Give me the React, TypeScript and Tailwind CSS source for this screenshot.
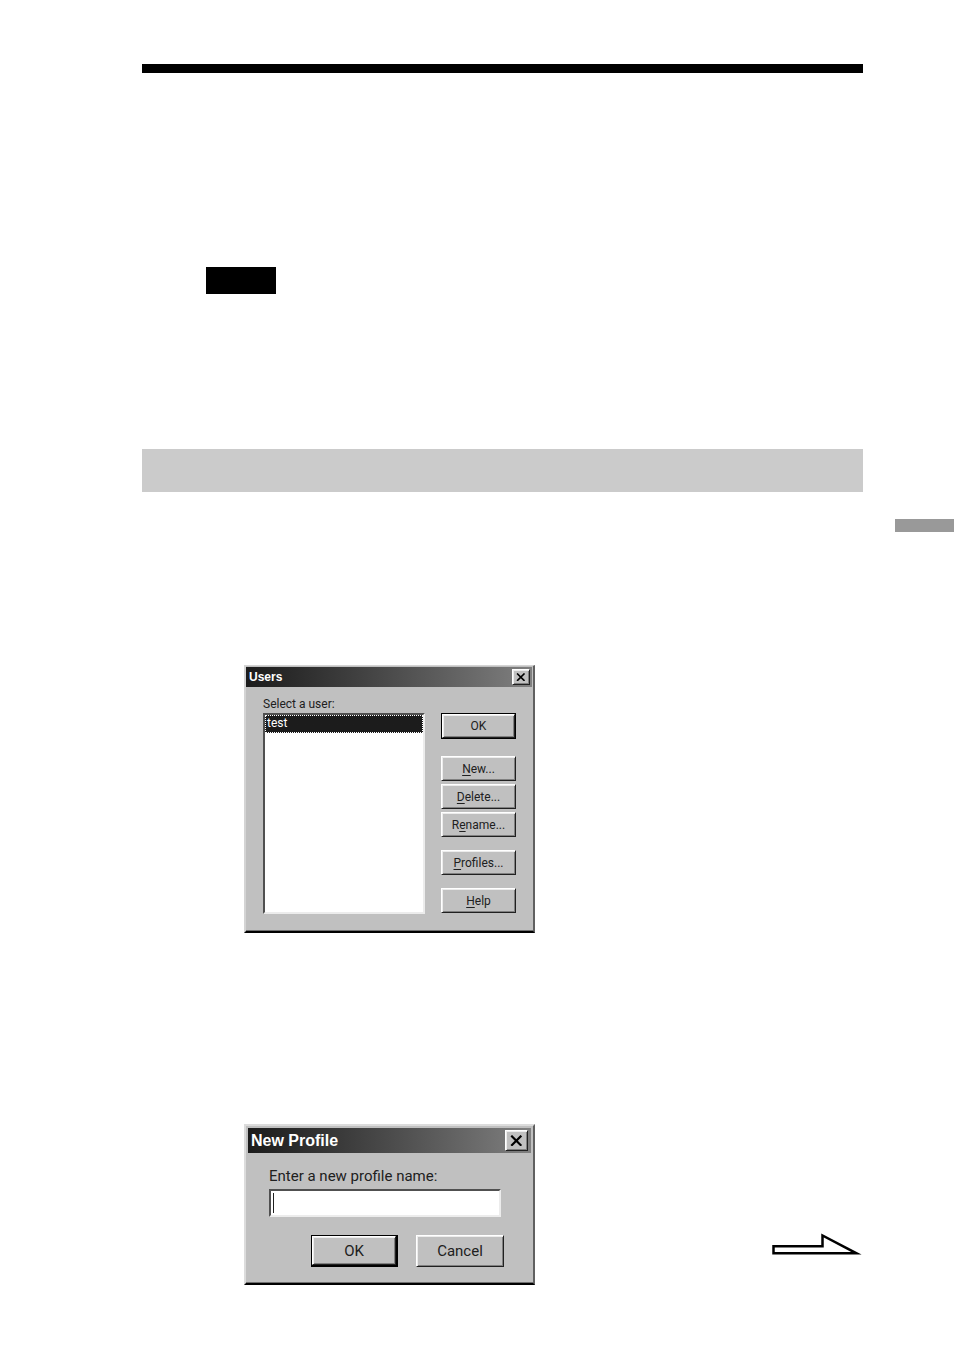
import React, { useState } from "react";

const raised =
  "border border-t-white border-l-white border-r-[#202020] border-b-[#202020] bg-[#c0c0c0] shadow-[inset_1px_1px_0_#ececec,inset_-1px_-1px_0_#808080]";

const CloseButton = ({ className }: { className: string }) => (
  <button
    aria-label="Close"
    className={`flex items-center justify-center ${raised} ${className}`}
  >
    <svg viewBox="0 0 10 9" className="h-3/5 w-3/5" aria-hidden="true">
      <path d="M1 0.5L9 8.5M9 0.5L1 8.5" stroke="#000" strokeWidth="1.7" />
    </svg>
  </button>
);

const userActions = [
  { before: "", letter: "N", after: "ew...", space: "mt-[17px]" },
  { before: "", letter: "D", after: "elete...", space: "mt-[3px]" },
  { before: "R", letter: "e", after: "name...", space: "mt-[3px]" },
  { before: "", letter: "P", after: "rofiles...", space: "mt-[13px]" },
  { before: "", letter: "H", after: "elp", space: "mt-[13px]" },
];

const UsersDialog = () => (
  <section
    aria-labelledby="users-title"
    className="w-[291px] border-t border-l-2 border-r-2 border-b-2 border-t-[#d4d4d4] border-l-[#d4d4d4] border-r-[#606060] border-b-black bg-[#c0c0c0] pt-px pr-px font-[Roboto,sans-serif] text-xs leading-4 text-[#202020] shadow-[inset_0_-1px_0_#707070]"
  >
    <header className="flex h-5 items-center justify-between bg-linear-to-r from-[#1c1c1c] to-[#808080] pr-[2px] pl-[3px]">
      <h2
        id="users-title"
        className="font-['Liberation_Sans',sans-serif] font-bold text-white"
      >
        Users
      </h2>
      <CloseButton className="h-4 w-[18px]" />
    </header>
    <div className="flex justify-between pt-[9px] pr-4 pb-[17px] pl-[17px]">
      <div className="flex w-[162px] flex-col">
        <label htmlFor="user-list">Select a user:</label>
        <select
          id="user-list"
          size={11}
          defaultValue="test"
          className="mt-px h-[201px] appearance-none overflow-hidden rounded-none border-2 border-t-[#505050] border-r-[#ececec] border-b-[#ececec] border-l-[#505050] bg-white outline-none"
        >
          <option
            value="test"
            className="h-[18px] border border-dotted border-white bg-[#1c1c1c] bg-linear-to-r from-[#1c1c1c] to-[#1c1c1c] px-px py-0 leading-4 text-white [-webkit-text-fill-color:white]"
          >
            test
          </option>
        </select>
      </div>
      <div className="flex w-[75px] flex-col pt-[17px]">
        <button className="h-[26px] border border-black">
          <span className={`flex h-full items-center justify-center ${raised}`}>
            OK
          </span>
        </button>
        {userActions.map(({ before, letter, after, space }) => (
          <button
            key={letter + after}
            className={`h-[25px] ${raised} ${space}`}
          >
            {before}
            <span className="underline underline-offset-2">{letter}</span>
            {after}
          </button>
        ))}
      </div>
    </div>
  </section>
);

const NewProfileDialog = () => {
  const [name, setName] = useState("");

  return (
    <section
      aria-labelledby="profile-title"
      className="w-[291px] border-2 border-t-[#dcdcdc] border-r-[#606060] border-b-black border-l-[#dcdcdc] bg-[#c0c0c0] px-[2px] pt-[2px] font-[Roboto,sans-serif] text-base leading-5 text-[#202020] shadow-[inset_0_-1px_0_#707070]"
    >
      <header className="flex h-[25px] items-center justify-between bg-linear-to-r from-[#1c1c1c] to-[#808080] pr-[3px] pl-[3px]">
        <h2
          id="profile-title"
          className="font-['Liberation_Sans',sans-serif] font-bold text-white"
        >
          New Profile
        </h2>
        <CloseButton className="h-[21px] w-[23px]" />
      </header>
      <div className="pt-[13px] pr-[27px] pb-4 pl-[21px]">
        <label htmlFor="profile-name" className="block text-[15px]">
          Enter a new profile name:
        </label>
        <div className="mt-[3px] mr-[3px] flex h-7 items-center border-2 border-t-[#505050] border-r-[#ececec] border-b-[#ececec] border-l-[#505050] bg-white pl-[2px]">
          <span className="h-5 w-px bg-[#202020]" />
          <input
            id="profile-name"
            type="text"
            value={name}
            onChange={(e) => setName(e.target.value)}
            className="h-full w-full min-w-0 bg-transparent px-1 outline-none"
          />
        </div>
        <div className="mt-[18px] flex justify-end gap-[18px] text-[15px]">
          <button className="h-8 w-[87px] border-2 border-t border-l border-black">
            <span className={`flex h-full items-center justify-center ${raised}`}>
              OK
            </span>
          </button>
          <button className={`h-8 w-[88px] ${raised}`}>Cancel</button>
        </div>
      </div>
    </section>
  );
};

const App = () => {
  return (
    <div className="flex min-h-screen gap-8 bg-white">
      <main className="grow pt-16 pb-16 pl-[142px]">
        <div className="h-[9px] bg-black" />
        <div className="mt-[194px] ml-16 h-[27px] w-[70px] bg-black" />
        <div className="mt-[155px] h-[43px] bg-[#cbcbcb]" />
        <div className="mt-[173px] ml-[102px]">
          <UsersDialog />
        </div>
        <div className="mt-[191px] ml-[102px] flex items-end justify-between">
          <NewProfileDialog />
          <svg
            viewBox="0 0 91 22"
            className="mb-[30px] h-[22px] w-[91px]"
            aria-hidden="true"
          >
            <path
              d="M1.5 13.2H50.5V2.5L84.5 20.3H1.5Z"
              fill="#fff"
              stroke="#000"
              strokeWidth="2.5"
              strokeMiterlimit="10"
            />
          </svg>
        </div>
      </main>
      <aside className="w-[59px] shrink-0 pt-[519px]">
        <div className="h-[13px] bg-[#999999]" />
      </aside>
    </div>
  );
};

export default App;
